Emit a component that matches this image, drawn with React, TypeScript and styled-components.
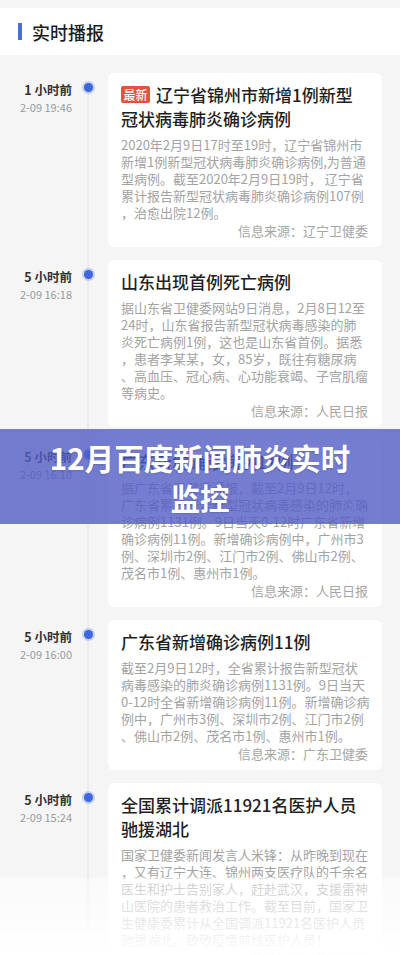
import React from "react";
import styled, { createGlobalStyle } from "styled-components";

const GlobalStyle = createGlobalStyle`
  html, body {
    margin: 0;
    padding: 0;
    background: #f5f5f5;
  }
  body {
    font-family: "Noto Sans CJK SC", "Noto Sans", sans-serif;
    overflow: hidden;
  }
`;

type NewsItem = {
  ago: string;
  stamp: string;
  fresh?: boolean;
  title: string;
  lines: string[];
  source: string;
};

const news: NewsItem[] = [
  {
    ago: "1 小时前",
    stamp: "2-09 19:46",
    fresh: true,
    title: "辽宁省锦州市新增1例新型冠状病毒肺炎确诊病例",
    lines: [
      "2020年2月9日17时至19时，辽宁省锦州市",
      "新增1例新型冠状病毒肺炎确诊病例,为普通",
      "型病例。截至2020年2月9日19时， 辽宁省",
      "累计报告新型冠状病毒肺炎确诊病例107例",
      "，治愈出院12例。",
    ],
    source: "辽宁卫健委",
  },
  {
    ago: "5 小时前",
    stamp: "2-09 16:18",
    title: "山东出现首例死亡病例",
    lines: [
      "据山东省卫健委网站9日消息，2月8日12至",
      "24时，山东省报告新型冠状病毒感染的肺",
      "炎死亡病例1例，这也是山东省首例。据悉",
      "，患者李某某，女，85岁，既往有糖尿病",
      "、高血压、冠心病、心功能衰竭、子宫肌瘤",
      "等病史。",
    ],
    source: "人民日报",
  },
  {
    ago: "5 小时前",
    stamp: "2-09 16:10",
    title: "广东新增确诊病例11例",
    lines: [
      "据广东省卫健委通报，截至2月9日12时，",
      "广东省累计报告新型冠状病毒感染的肺炎确",
      "诊病例1131例。9日当天0-12时广东省新增",
      "确诊病例11例。新增确诊病例中，广州市3",
      "例、深圳市2例、江门市2例、佛山市2例、",
      "茂名市1例、惠州市1例。",
    ],
    source: "人民日报",
  },
  {
    ago: "5 小时前",
    stamp: "2-09 16:00",
    title: "广东省新增确诊病例11例",
    lines: [
      "截至2月9日12时，全省累计报告新型冠状",
      "病毒感染的肺炎确诊病例1131例。9日当天",
      "0-12时全省新增确诊病例11例。新增确诊病",
      "例中，广州市3例、深圳市2例、江门市2例",
      "、佛山市2例、茂名市1例、惠州市1例。",
    ],
    source: "广东卫健委",
  },
  {
    ago: "5 小时前",
    stamp: "2-09 15:24",
    title: "全国累计调派11921名医护人员驰援湖北",
    lines: [
      "国家卫健委新闻发言人米锋：从昨晚到现在",
      "，又有辽宁大连、锦州两支医疗队的千余名",
      "医生和护士告别家人，赶赴武汉，支援雷神",
      "山医院的患者救治工作。截至目前，国家卫",
      "生健康委累计从全国调派11921名医护人员",
      "驰援湖北。致敬疫情前线医护人员！",
    ],
    source: "央视新闻",
  },
];

export default function App() {
  return (
    <Page>
      <GlobalStyle />
      <Header>
        <Accent />
        <HeaderTitle>实时播报</HeaderTitle>
      </Header>

      <Feed>
        {news.map((item, i) => (
          <Entry key={i}>
            <TimeCol>
              <Ago>{item.ago}</Ago>
              <Stamp>{item.stamp}</Stamp>
            </TimeCol>
            <Rail $first={i === 0}>
              <Dot />
            </Rail>
            <Card>
              <Title>
                {item.fresh && <Badge>最新</Badge>}
                {item.title}
              </Title>
              <Body>
                {item.lines.map((line, j) => (
                  <Line key={j}>{line}</Line>
                ))}
              </Body>
              <Source>信息来源：{item.source}</Source>
            </Card>
          </Entry>
        ))}
      </Feed>

      <Banner>
        <BannerText>12月百度新闻肺炎实时</BannerText>
        <BannerText>监控</BannerText>
      </Banner>
      <BottomFade />
    </Page>
  );
}

const Page = styled.div`
  position: relative;
  width: 400px;
  min-height: 955px;
  background: #f5f5f5;
  padding-top: 8px;
`;

const Header = styled.div`
  display: flex;
  align-items: center;
  height: 47px;
  padding-left: 18px;
  background: #fff;
`;

const Accent = styled.span`
  width: 4px;
  height: 17px;
  background: #4b6fd3;
`;

const HeaderTitle = styled.h1`
  margin: 0 0 0 10px;
  font-size: 18px;
  font-weight: 500;
  color: #1c1c1c;
  line-height: 24px;
`;

const Feed = styled.div`
  padding-top: 18px;
`;

const Entry = styled.div`
  display: grid;
  grid-template-columns: 72px 32px 278px;
  padding-bottom: 13px;
`;

const TimeCol = styled.div`
  display: flex;
  flex-direction: column;
  align-items: flex-end;
  padding-top: 8px;
`;

const Ago = styled.div`
  font-size: 12.5px;
  line-height: 18px;
  font-weight: 600;
  color: #333;
  white-space: nowrap;
`;

const Stamp = styled.div`
  font-size: 11px;
  line-height: 16px;
  color: #9a9a9a;
  white-space: nowrap;
`;

const Rail = styled.div<{ $first?: boolean }>`
  position: relative;
  &::before {
    content: "";
    position: absolute;
    left: 15px;
    width: 2px;
    top: ${(p) => (p.$first ? "15px" : "0")};
    bottom: -13px;
    background: #ebebeb;
  }
`;

const Dot = styled.span`
  position: absolute;
  left: 11.5px;
  top: 10px;
  width: 9px;
  height: 9px;
  border-radius: 50%;
  background: #3d66df;
  box-shadow: 0 0 0 2px rgba(61, 102, 223, 0.25);
`;

const Card = styled.div`
  margin-left: 4px;
  background: #fff;
  border-radius: 6px;
  padding: 10px 14px 7px 13px;
`;

const Title = styled.div`
  font-size: 17px;
  line-height: 24px;
  font-weight: 500;
  color: #1f1f1f;
  margin-bottom: 5px;
`;

const Badge = styled.span`
  display: inline-block;
  vertical-align: 2px;
  width: 29px;
  height: 17px;
  margin-right: 6px;
  border-radius: 2px;
  background: #e1533b;
  color: #fff;
  font-size: 12px;
  line-height: 17px;
  text-align: center;
`;

const Body = styled.div`
  font-size: 13px;
  line-height: 17px;
  color: #a3a3a3;
`;

const Line = styled.div`
  white-space: nowrap;
`;

const Source = styled.div`
  margin-top: 1px;
  font-size: 13px;
  line-height: 18px;
  color: #a6a6a6;
  text-align: right;
`;

const Banner = styled.div`
  position: absolute;
  left: 0;
  right: 0;
  top: 429px;
  height: 95px;
  display: flex;
  flex-direction: column;
  align-items: center;
  justify-content: center;
  background: rgba(82, 92, 196, 0.8);
`;

const BannerText = styled.div`
  font-size: 29.5px;
  line-height: 40px;
  font-weight: 700;
  color: #fff;
  text-shadow: 0 1px 2px rgba(0, 0, 0, 0.15);
`;

const BottomFade = styled.div`
  position: fixed;
  left: 0;
  right: 0;
  bottom: 0;
  height: 78px;
  background: linear-gradient(
    to bottom,
    rgba(255, 255, 255, 0.45),
    rgba(255, 255, 255, 0.97)
  );
`;
